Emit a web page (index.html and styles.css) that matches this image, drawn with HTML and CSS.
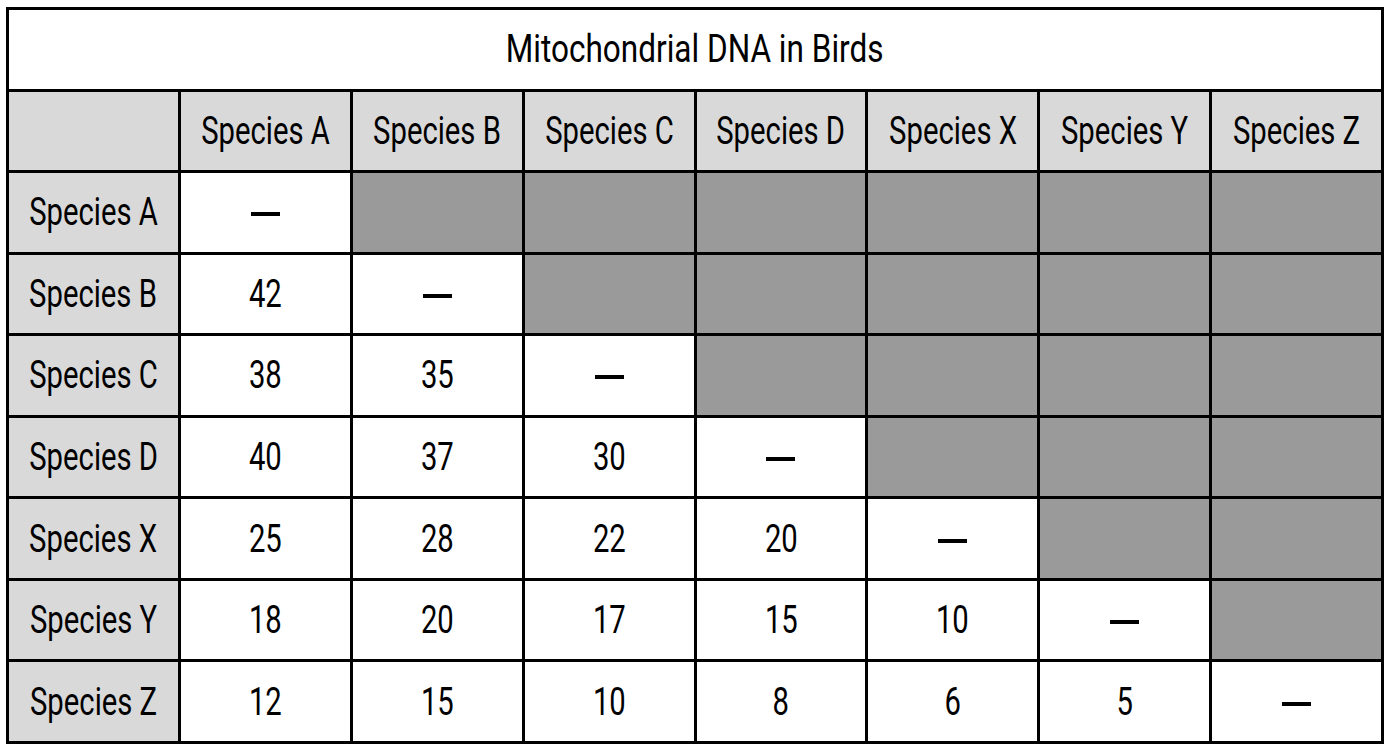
FILE: index.html
```html
<!DOCTYPE html>
<html lang="en">
<head>
<meta charset="utf-8">
<title>Mitochondrial DNA in Birds</title>
<link rel="stylesheet" href="styles.css">
</head>
<body>
<div class="matrix" role="table" aria-label="Mitochondrial DNA in Birds">
  <div class="cell title"><span class="t">Mitochondrial DNA in Birds</span></div>

  <div class="cell head"></div>
  <div class="cell head"><span class="t">Species A</span></div>
  <div class="cell head"><span class="t">Species B</span></div>
  <div class="cell head"><span class="t">Species C</span></div>
  <div class="cell head"><span class="t">Species D</span></div>
  <div class="cell head"><span class="t">Species X</span></div>
  <div class="cell head"><span class="t">Species Y</span></div>
  <div class="cell head"><span class="t">Species Z</span></div>

  <div class="cell head"><span class="t">Species A</span></div>
  <div class="cell"><span class="dash"></span></div>
  <div class="cell off"></div><div class="cell off"></div><div class="cell off"></div><div class="cell off"></div><div class="cell off"></div><div class="cell off"></div>

  <div class="cell head"><span class="t">Species B</span></div>
  <div class="cell"><span class="t">42</span></div>
  <div class="cell"><span class="dash"></span></div>
  <div class="cell off"></div><div class="cell off"></div><div class="cell off"></div><div class="cell off"></div><div class="cell off"></div>

  <div class="cell head"><span class="t">Species C</span></div>
  <div class="cell"><span class="t">38</span></div>
  <div class="cell"><span class="t">35</span></div>
  <div class="cell"><span class="dash"></span></div>
  <div class="cell off"></div><div class="cell off"></div><div class="cell off"></div><div class="cell off"></div>

  <div class="cell head"><span class="t">Species D</span></div>
  <div class="cell"><span class="t">40</span></div>
  <div class="cell"><span class="t">37</span></div>
  <div class="cell"><span class="t">30</span></div>
  <div class="cell"><span class="dash"></span></div>
  <div class="cell off"></div><div class="cell off"></div><div class="cell off"></div>

  <div class="cell head"><span class="t">Species X</span></div>
  <div class="cell"><span class="t">25</span></div>
  <div class="cell"><span class="t">28</span></div>
  <div class="cell"><span class="t">22</span></div>
  <div class="cell"><span class="t">20</span></div>
  <div class="cell"><span class="dash"></span></div>
  <div class="cell off"></div><div class="cell off"></div>

  <div class="cell head"><span class="t">Species Y</span></div>
  <div class="cell"><span class="t">18</span></div>
  <div class="cell"><span class="t">20</span></div>
  <div class="cell"><span class="t">17</span></div>
  <div class="cell"><span class="t">15</span></div>
  <div class="cell"><span class="t">10</span></div>
  <div class="cell"><span class="dash"></span></div>
  <div class="cell off"></div>

  <div class="cell head"><span class="t">Species Z</span></div>
  <div class="cell"><span class="t">12</span></div>
  <div class="cell"><span class="t">15</span></div>
  <div class="cell"><span class="t">10</span></div>
  <div class="cell"><span class="t">8</span></div>
  <div class="cell"><span class="t">6</span></div>
  <div class="cell"><span class="t">5</span></div>
  <div class="cell"><span class="dash"></span></div>
</div>
</body>
</html>
```

FILE: styles.css
```css
html, body {
  margin: 0;
  padding: 0;
  background: #ffffff;
}

body {
  padding: 7px 0 0 6px;
  font-family: Roboto, "Liberation Sans", sans-serif;
  font-weight: 400;
  color: #000000;
}

.matrix {
  box-sizing: border-box;
  width: 1378px;
  height: 737px;
  display: grid;
  grid-template-columns: 169px repeat(7, 1fr);
  grid-template-rows: repeat(9, 1fr);
  gap: 3px;
  padding: 3px;
  background: #000000;
}

.cell {
  background: #ffffff;
  display: flex;
  align-items: center;
  justify-content: center;
  font-size: 38px;
  line-height: 1;
  white-space: nowrap;
}

.t {
  display: inline-block;
  transform: scaleX(0.77);
}

.title .t {
  transform: scaleX(0.83);
}

.dash {
  display: block;
  width: 29px;
  height: 0;
  border-top: 4px solid #000000;
  margin-top: 4px;
}

.title {
  grid-column: 1 / -1;
}

.head {
  background: #d9d9d9;
}

.off {
  background: #9a9a9a;
}
```
